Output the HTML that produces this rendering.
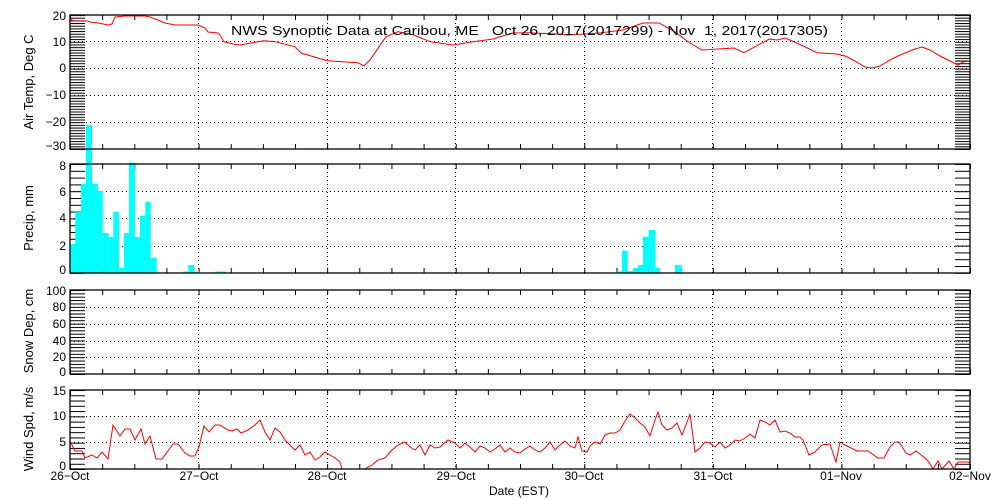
<!DOCTYPE html>
<html><head><meta charset="utf-8"><style>
html,body{margin:0;padding:0;background:#fff;width:1000px;height:500px;overflow:hidden}
svg{display:block}
text{font-family:"Liberation Sans",sans-serif;font-size:12px;fill:#000}
</style></head><body>
<svg width="1000" height="500" viewBox="0 0 1000 500" xmlns="http://www.w3.org/2000/svg">
<defs>
<pattern id="pt" x="0" y="15" width="20" height="2.68" patternUnits="userSpaceOnUse"><rect x="0" y="0" width="20" height="1" fill="#000"/></pattern>
<pattern id="pp" x="0" y="164" width="20" height="6.8" patternUnits="userSpaceOnUse"><rect x="0" y="0" width="20" height="1" fill="#000"/></pattern>
<pattern id="ps" x="0" y="290" width="20" height="3.36" patternUnits="userSpaceOnUse"><rect x="0" y="0" width="20" height="1" fill="#000"/></pattern>
<pattern id="pw" x="0" y="390" width="20" height="5.27" patternUnits="userSpaceOnUse"><rect x="0" y="0" width="20" height="1" fill="#000"/></pattern>
<pattern id="px" x="70" y="0" width="32.143" height="10" patternUnits="userSpaceOnUse"><rect x="0" y="0" width="1" height="10" fill="#000"/></pattern>
<clipPath id="c1"><rect x="70" y="15" width="900" height="134"/></clipPath>
<clipPath id="c4"><rect x="70" y="390" width="900" height="79"/></clipPath>
</defs>

<rect x="70" y="15" width="15" height="135" fill="url(#pt)"/>
<rect x="955" y="15" width="15" height="135" fill="url(#pt)"/>
<rect x="70" y="164" width="15" height="110" fill="url(#pp)"/>
<rect x="955" y="164" width="15" height="110" fill="url(#pp)"/>
<rect x="70" y="290" width="15" height="85" fill="url(#ps)"/>
<rect x="955" y="290" width="15" height="85" fill="url(#ps)"/>
<rect x="70" y="390" width="15" height="80" fill="url(#pw)"/>
<rect x="955" y="390" width="15" height="80" fill="url(#pw)"/>
<rect x="70" y="15" width="901" height="5" fill="url(#px)"/>
<rect x="70" y="144" width="901" height="5" fill="url(#px)"/>
<rect x="70" y="164" width="901" height="5" fill="url(#px)"/>
<rect x="70" y="268" width="901" height="5" fill="url(#px)"/>
<rect x="70" y="290" width="901" height="5" fill="url(#px)"/>
<rect x="70" y="369" width="901" height="5" fill="url(#px)"/>
<rect x="70" y="390" width="901" height="5" fill="url(#px)"/>
<rect x="70" y="464" width="901" height="5" fill="url(#px)"/>

<g stroke="#000" stroke-width="1" stroke-dasharray="1,3" fill="none">
<path d="M70 41.5H970M70 68.5H970M70 95.5H970M70 122.5H970"/>
<path d="M70 191.5H970M70 218.5H970M70 246.5H970"/>
<path d="M70 307.5H970M70 324.5H970M70 341.5H970M70 357.5H970"/>
<path d="M70 416.5H970M70 442.5H970"/>
<path d="M198.5 15V149M327.5 15V149M455.5 15V149M584.5 15V149M712.5 15V149M841.5 15V149"/>
<path d="M198.5 164V273M327.5 164V273M455.5 164V273M584.5 164V273M712.5 164V273M841.5 164V273"/>
<path d="M198.5 290V374M327.5 290V374M455.5 290V374M584.5 290V374M712.5 290V374M841.5 290V374"/>
<path d="M198.5 390V469M327.5 390V469M455.5 390V469M584.5 390V469M712.5 390V469M841.5 390V469"/>
</g>

<g fill="#00ffff">
<rect x="70" y="244" width="5.4" height="29"/>
<rect x="75.3" y="212" width="5.8" height="61"/>
<rect x="81" y="183.7" width="5.2" height="89.3"/>
<rect x="86" y="125" width="6" height="148"/>
<rect x="92" y="183.7" width="5.8" height="89.3"/>
<rect x="97.7" y="191" width="5.1" height="82"/>
<rect x="102.7" y="233" width="6" height="40"/>
<rect x="108.7" y="237" width="4.7" height="36"/>
<rect x="113.3" y="211.7" width="5.7" height="61.3"/>
<rect x="119" y="267.7" width="5" height="5.3"/>
<rect x="124" y="233" width="5" height="40"/>
<rect x="129" y="162.7" width="6" height="110.3"/>
<rect x="135" y="237" width="5" height="36"/>
<rect x="140" y="215.7" width="5.3" height="57.3"/>
<rect x="145.3" y="201.7" width="5.4" height="71.3"/>
<rect x="150.7" y="257.7" width="6" height="15.3"/>
<rect x="183.3" y="271.5" width="5" height="1.5"/>
<rect x="188.3" y="265" width="5.7" height="8"/>
<rect x="194" y="271.5" width="5.3" height="1.5"/>
<rect x="215.3" y="271.5" width="10.7" height="1.5"/>
<rect x="616" y="271.5" width="6" height="1.5"/>
<rect x="622" y="250.7" width="5.7" height="22.3"/>
<rect x="627.7" y="271" width="5.3" height="2"/>
<rect x="633" y="268" width="5" height="5"/>
<rect x="638" y="265" width="5" height="8"/>
<rect x="643" y="236.7" width="5.7" height="36.3"/>
<rect x="648.7" y="230" width="6.6" height="43"/>
<rect x="655.3" y="268" width="4.7" height="5"/>
<rect x="675" y="265" width="6.7" height="8"/>
</g>

<polyline clip-path="url(#c1)" fill="none" stroke="#ff0000" stroke-width="1" points="70,19.5 75,21 88,21 90,22 98,23 108,25 112,24 115,17 125,16 145,16 150,17 158,20 165,23 175,25 198,25 205,28 208,32 218,33 220,35 224,41.7 233,44 240,45 263.5,40.7 275,41.7 295,46.7 301,53 327,60.7 358,62.7 364,66 370,60 386,36.7 398,31.7 414,35 430,41.7 453,45 473,41.7 493,39 512.5,33 528,32.7 556,34 568,35 599.5,33 623,30 643,23 659,23 674.6,31.7 690,43 702,50 734,48 744,52.7 769.5,39 777,40 785,38 797,43 817,52.7 836.7,54 845,56 855,61 865,67 872,68 880,66 890,60 900,55 915,49 922,47 930,50 940,56 950,61 958,65 963,62 970,61"/>

<polyline clip-path="url(#c4)" fill="none" stroke="#ff0000" stroke-width="1" points="70,441 75,451 82,451 85,458 92,455 97,458 102,452 108,459 113,425 120,436 125,429 130,429 135,440 141,429 145,444 150,436 156,459 162,459 173,444 178,444 185,453 190,456 195,456 199,447 204,426 209,432 215,425 220,425 228,430 232,431 237,429 241,433 248,430 255,425 260,420 265,432 270,440 275,428 280,432 285,440 290,445 295,450 300,445 305,455 310,452 315,460 320,457 325,452 330,455 335,458 340,462 345,480 372,465 378,460 385,458 392,450 398,445 405,442 410,447 415,450 420,445 425,455 430,445 435,448 440,447 448,440 455,443 460,448 465,443 470,447 475,452 480,446 485,448 490,452 495,449 500,445 505,452 510,448 515,452 520,453 525,449 530,446 535,450 540,452 545,448 550,442 555,450 560,445 565,441 570,446 575,448 578,437 582,451 587,452 590,446 595,442 600,444 605,435 610,433 615,433 620,430 625,421 630,414 635,418 640,423 645,427 650,436 655,420 658,412 662,425 667,430 672,428 677,423 682,435 686,425 690,414 695,452 700,448 705,442 710,443 715,447 720,442 725,448 730,445 735,440 740,441 745,438 750,434 755,438 760,420 765,422 770,425 775,420 780,432 785,431 790,433 795,437 800,437 803,440 809,455 815,452 822,445 830,444 836,462 840,442 845,445 857,451 868,451 878,458 884,458 890,447 895,442 899,442 906,453 910,455 916,451 925,458 928,461 933,469 938,461 942,469 949,461 954,469 958,462 970,462"/>

<g fill="none" stroke="#000" stroke-width="1.3">
<rect x="70" y="15" width="900" height="134"/>
<rect x="70" y="164" width="900" height="109"/>
<rect x="70" y="290" width="900" height="84"/>
<rect x="70" y="390" width="900" height="79"/>
</g>

<text x="231" y="35" textLength="597" lengthAdjust="spacingAndGlyphs" xml:space="preserve" style="font-size:13px">NWS Synoptic Data at Caribou, ME   Oct 26, 2017(2017299) - Nov  1, 2017(2017305)</text>

<g text-anchor="end">
<text x="66" y="20">20</text><text x="66" y="46">10</text><text x="66" y="72">0</text><text x="66" y="99">−10</text><text x="66" y="126">−20</text><text x="66" y="150">−30</text>
<text x="66" y="170">8</text><text x="66" y="196">6</text><text x="66" y="222">4</text><text x="66" y="250">2</text><text x="66" y="274">0</text>
<text x="66" y="295">100</text><text x="66" y="311">80</text><text x="66" y="328">60</text><text x="66" y="345">40</text><text x="66" y="361">20</text><text x="66" y="376">0</text>
<text x="66" y="395">15</text><text x="66" y="420">10</text><text x="66" y="446">5</text><text x="66" y="470">0</text>
</g>

<g text-anchor="middle">
<text transform="translate(33,82) rotate(-90)" style="font-size:13px">Air Temp, Deg C</text>
<text transform="translate(33,218) rotate(-90)" style="font-size:13px">Precip, mm</text>
<text transform="translate(33,331) rotate(-90)" style="font-size:13px">Snow Dep, cm</text>
<text transform="translate(33,429) rotate(-90)" style="font-size:13px">Wind Spd, m/s</text>
</g>

<g text-anchor="middle">
<text x="70" y="480">26−Oct</text><text x="199" y="480">27−Oct</text><text x="327" y="480">28−Oct</text><text x="456" y="480">29−Oct</text><text x="584" y="480">30−Oct</text><text x="713" y="480">31−Oct</text><text x="841" y="480">01−Nov</text><text x="970" y="480">02−Nov</text>
<text x="519" y="495">Date (EST)</text>
</g>
</svg>
</body></html>
